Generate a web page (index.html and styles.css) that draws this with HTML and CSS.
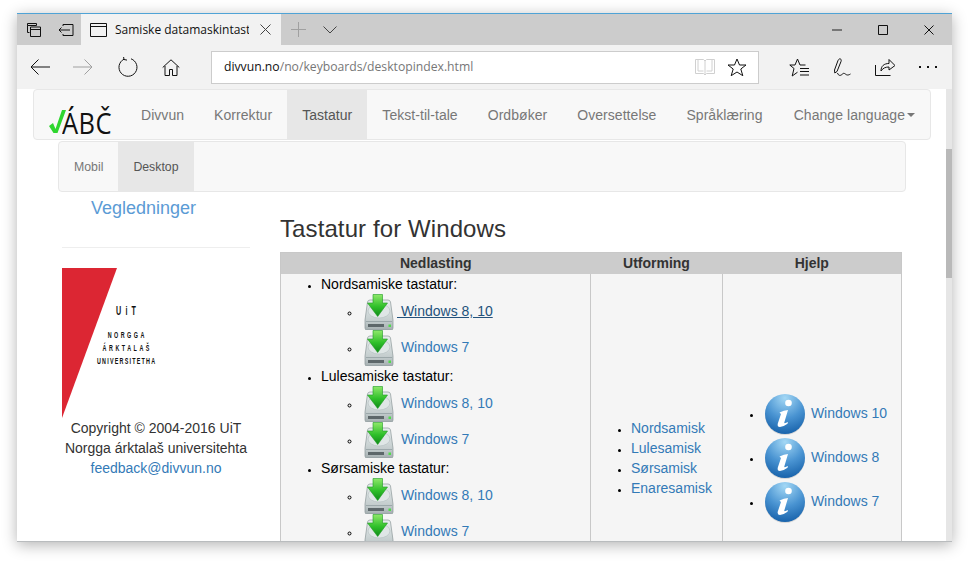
FILE: index.html
```html
<!DOCTYPE html>
<html lang="no">
<head>
  <meta charset="UTF-8" />
  <title>Samiske datamaskintastatur</title>
  <link rel="stylesheet" href="styles.css">
</head>
<body>
  <svg class="defs" width="0" height="0">
    <defs>
      <linearGradient id="gArrow" x1="0" y1="0" x2="0" y2="1">
        <stop offset="0" stop-color="#8fe86a"/>
        <stop offset="0.55" stop-color="#2fc02a"/>
        <stop offset="1" stop-color="#0f8a18"/>
      </linearGradient>
      <linearGradient id="gDisk" x1="0" y1="0" x2="0" y2="1">
        <stop offset="0" stop-color="#e8eeee"/>
        <stop offset="0.7" stop-color="#c3cccd"/>
        <stop offset="1" stop-color="#a4aeb0"/>
      </linearGradient>
      <radialGradient id="gInfo" cx="0.5" cy="0.1" r="1">
        <stop offset="0" stop-color="#a4d8f5"/>
        <stop offset="0.5" stop-color="#4a94d2"/>
        <stop offset="1" stop-color="#0c57a2"/>
      </radialGradient>
      <symbol id="disk" viewBox="0 0 36 36">
        <path d="M9 6h18q2 0 2.500 2L32 26v8a2 2 0 0 1-2 2H6a2 2 0 0 1-2-2v-8L6.500 8Q7 6 9 6z" fill="url(#gDisk)" stroke="#8b9698" stroke-width=".7"/>
        <ellipse cx="18" cy="17" rx="11" ry="7" fill="#dfe6e6" stroke="#b4bdbf" stroke-width=".6"/>
        <path d="M5 27.500h26" stroke="#8d999c" stroke-width=".7"/>
        <rect x="7" y="30" width="16" height="3" fill="#5d676a"/>
        <rect x="27.500" y="30.500" width="2.500" height="2.500" fill="#4fdc4a"/>
        <path d="M12 .5h9.500V9h5L16.700 22.500 6.500 9H12z" fill="url(#gArrow)" stroke="#1c9a22" stroke-width=".6"/>
      </symbol>
      <symbol id="info" viewBox="0 0 44 44">
        <ellipse cx="22" cy="23" rx="20" ry="20" fill="#000" opacity=".12"/>
        <circle cx="22" cy="22" r="20" fill="url(#gInfo)"/>
        <circle cx="25.500" cy="11" r="3.300" fill="#fff"/>
        <path d="M16.500 20.500q4.500-2.500 8.500-2.500L21.300 30.500q-.3 1.500 3.700-.5l-.5 1.700q-4 3-7.500 3.300-3 0-2.200-3.500L18 22z" fill="#fff"/>
      </symbol>
    </defs>
  </svg>

  <div class="window">
    <div class="titlebar">
      <svg class="ic ic-tabs" width="16" height="16" viewBox="0 0 16 16"><path d="M1.500 1.500h9v2h-9zM1.500 3.500v7h2M4.500 5h10v9.500h-10zM4.500 7.500h10" /></svg>
      <svg class="ic ic-aside" width="16" height="16" viewBox="0 0 16 16"><path d="M5 4V2.500h10v11H5V12M1 8h8M3.500 5.500L1 8l2.500 2.500M9 8h3" /></svg>
      <div class="tab">
        <svg class="ic" width="17" height="14" viewBox="0 0 17 14"><path d="M.5 .5h16v13H.5zM.5 3.500h16" /></svg>
        <span class="tab-title">Samiske datamaskintastatur</span>
        <svg class="ic ic-gray" width="11" height="11" viewBox="0 0 11 11"><path d="M.5 .5l10 10M10.500 .5l-10 10" /></svg>
      </div>
      <svg class="ic ic-light ic-plus" width="15" height="15" viewBox="0 0 15 15"><path d="M7.500 0v15M0 7.500h15" /></svg>
      <svg class="ic ic-gray ic-chev" width="14" height="8" viewBox="0 0 14 8"><path d="M.5 .5L7 7l6.500-6.500" /></svg>
      <div class="win-btns">
        <span class="win-min"></span>
        <svg class="ic" width="10" height="10" viewBox="0 0 10 10"><path d="M.5 .5h9v9h-9z" /></svg>
        <svg class="ic" width="10" height="10" viewBox="0 0 10 10"><path d="M.5 .5l9 9M9.500 .5l-9 9" /></svg>
      </div>
    </div>

    <div class="toolbar">
      <svg class="ic" width="20" height="16" viewBox="0 0 20 16"><path d="M20 8H1M8.500 .5L1 8l7.500 7.500" /></svg>
      <svg class="ic ic-light ic-fwd" width="20" height="16" viewBox="0 0 20 16"><path d="M0 8h19M11.500 .5L19 8l-7.500 7.500" /></svg>
      <svg class="ic" width="20" height="20" viewBox="0 0 20 20"><path d="M6 2.200A9 9 0 1 0 13 1.800M5.500 -.5L6 2.500l3 .6" /></svg>
      <svg class="ic ic-home" width="18" height="17" viewBox="0 0 18 17"><path d="M.7 8.500L9 .8l8.300 7.700M3 7v9.500h4.500v-6h3v6H15V7" /></svg>
      <div class="addr">
        <span class="url"><span class="host">divvun.no</span>/no/keyboards/desktopindex.html</span>
        <svg class="ic ic-pale" width="20" height="18" viewBox="0 0 20 18"><path d="M.5 1.500h8L10 3l1.500-1.500h8v14h-8L10 17l-1.500-1.500h-8zM10 3v14M3 1.500v11.500h5.500M17 1.500v11.500h-5.500" /></svg>
        <svg class="ic" width="20" height="19" viewBox="0 0 20 19"><path d="M10 1l2.500 6h6.500l-5.200 4 2 6.700L10 14l-5.800 3.700 2-6.700L1 7h6.500z" /></svg>
      </div>
      <div class="tools">
        <svg class="ic" width="20" height="19" viewBox="0 0 20 19"><path d="M16.500 7H11L8.500 1 6 7H.8L5 10.500 3.200 18l5.300-3.800M11 10.500h9M11 13.500h9M11 17h9" /></svg>
        <svg class="ic" width="18" height="19" viewBox="0 0 18 19"><path d="M5 2.500C6.500 -.5 9 1 8 3.500L4 13.500 1.800 15 1.500 12zM4.500 15c1 3 3 3 5 1s3 1 5 1 2.500-1 3-1" /></svg>
        <svg class="ic" width="20" height="18" viewBox="0 0 20 18"><path d="M.5 7v10.500h15M6 13c0-5 3-7.500 8-7.500V1.500l6 6-6 4.500V9c-3.500 0-6 1-8 4z" /></svg>
        <div class="dots"><i></i><i></i><i></i></div>
      </div>
    </div>

    <div class="viewport">
      <div class="page">
        <nav class="navbar">
          <a class="brand">
            <svg class="check" width="19" height="30" viewBox="0 0 19 30"><path d="M2 21l4-3 2.500 6L15 5h4l-8.500 23h-4z" /></svg>
            <span class="abc">ÁBČ</span>
          </a>
          <a class="nav-item">Divvun</a>
          <a class="nav-item">Korrektur</a>
          <a class="nav-item active">Tastatur</a>
          <a class="nav-item">Tekst-til-tale</a>
          <a class="nav-item">Ordbøker</a>
          <a class="nav-item">Oversettelse</a>
          <a class="nav-item">Språklæring</a>
          <a class="nav-item lang">Change language<b class="caret"></b></a>
        </nav>
        <nav class="subnav">
          <a class="nav-item">Mobil</a>
          <a class="nav-item active">Desktop</a>
        </nav>

        <div class="columns">
          <aside class="sidebar">
            <a class="side-link">Vegledninger</a>
            <hr>
            <svg class="uit" width="188" height="150" viewBox="0 0 188 150">
              <path d="M0 0h55L0 150z" fill="#dc2633"/>
              <text class="uit-big" transform="translate(64 47) scale(.6 1)" textLength="33">UiT</text>
              <text class="uit-small" transform="translate(64 70) scale(.6 1)" textLength="61">NORGGA</text>
              <text class="uit-small" transform="translate(64 83) scale(.6 1)" textLength="78">ÁRKTALAŠ</text>
              <text class="uit-small" transform="translate(64 96) scale(.6 1)" textLength="97">UNIVERSITETHA</text>
            </svg>
            <p class="copy">Copyright © 2004-2016 UiT<br>Norgga árktalaš universitehta<br><a>feedback@divvun.no</a></p>
          </aside>

          <main class="content">
            <h1>Tastatur for Windows</h1>
            <table>
              <colgroup><col class="col-a"><col class="col-b"><col class="col-c"></colgroup>
              <thead>
                <tr><th>Nedlasting</th><th>Utforming</th><th>Hjelp</th></tr>
              </thead>
              <tbody>
                <tr>
                  <td>
                    <ul class="downloads">
                      <li>Nordsamiske tastatur:
                        <ul>
                          <li><a class="hover"><svg class="dl"><use href="#disk"/></svg> Windows 8, 10</a></li>
                          <li><a><svg class="dl"><use href="#disk"/></svg> Windows 7</a></li>
                        </ul>
                      </li>
                      <li>Lulesamiske tastatur:
                        <ul>
                          <li><a><svg class="dl"><use href="#disk"/></svg> Windows 8, 10</a></li>
                          <li><a><svg class="dl"><use href="#disk"/></svg> Windows 7</a></li>
                        </ul>
                      </li>
                      <li>Sørsamiske tastatur:
                        <ul>
                          <li><a><svg class="dl"><use href="#disk"/></svg> Windows 8, 10</a></li>
                          <li><a><svg class="dl"><use href="#disk"/></svg> Windows 7</a></li>
                        </ul>
                      </li>
                      <li>Enaresamiske tastatur:
                        <ul>
                          <li><a><svg class="dl"><use href="#disk"/></svg> Windows 8, 10</a></li>
                          <li><a><svg class="dl"><use href="#disk"/></svg> Windows 7</a></li>
                        </ul>
                      </li>
                    </ul>
                  </td>
                  <td>
                    <ul>
                      <li><a>Nordsamisk</a></li>
                      <li><a>Lulesamisk</a></li>
                      <li><a>Sørsamisk</a></li>
                      <li><a>Enaresamisk</a></li>
                    </ul>
                  </td>
                  <td>
                    <ul class="helps">
                      <li><a><svg class="inf"><use href="#info"/></svg> Windows 10</a></li>
                      <li><a><svg class="inf"><use href="#info"/></svg> Windows 8</a></li>
                      <li><a><svg class="inf"><use href="#info"/></svg> Windows 7</a></li>
                    </ul>
                  </td>
                </tr>
              </tbody>
            </table>
          </main>
        </div>
      </div>
      <div class="scrollbar"><div class="thumb"></div></div>
    </div>
  </div>
</body>
</html>
```

FILE: styles.css
```css
html, body { height: 100%; }
body {
  margin: 0;
  padding: 13px 17px 0;
  box-sizing: border-box;
  background: #fff;
  overflow: hidden;
  font-family: "Liberation Sans", Arial, sans-serif;
  font-size: 14px;
  line-height: 20px;
  color: #333;
}
.defs { position: absolute; }

/* browser window */
.window {
  width: 935px;
  height: 529px;
  box-sizing: border-box;
  border-top: 1px solid #4fa3d6;
  border-bottom: 1px solid #b9bcbe;
  box-shadow: 0 3px 14px rgba(0, 0, 0, .3);
  display: flex;
  flex-direction: column;
  overflow: hidden;
  background: #fff;
}
.ic { fill: none; stroke: #111; stroke-width: 1; flex: none; display: block; }
.ic-gray { stroke: #444; }
.ic-light { stroke: #a0a0a0; }
.ic-pale { stroke: #d0d0d0; }

.titlebar {
  height: 31px;
  flex: none;
  background: #ccc;
  display: flex;
  align-items: center;
  font-family: "Open Sans", sans-serif;
}
.ic-tabs { margin-left: 9px; }
.ic-aside { margin-left: 16px; }
.tab {
  margin-left: 7px;
  width: 200px;
  height: 100%;
  box-sizing: border-box;
  padding: 0 10px 0 9px;
  background: #f2f2f2;
  display: flex;
  align-items: center;
  color: #111;
  font-size: 12px;
}
.tab-title {
  width: 135px;
  margin: 0 11px 0 8px;
  overflow: hidden;
  white-space: nowrap;
}
.ic-plus { margin-left: 10px; }
.ic-chev { margin-left: 17px; }
.win-btns {
  margin-left: auto;
  width: 120px;
  display: flex;
  align-items: center;
  gap: 36px;
}
.win-min { width: 10px; height: 2px; background: #777; }

.toolbar {
  height: 44px;
  flex: none;
  background: #f2f2f2;
  display: flex;
  align-items: center;
  gap: 25px;
  padding-left: 13px;
}
.ic-fwd { margin-left: -2px; }
.ic-home { margin: 0 1px 0 -1px; }
.addr {
  margin-left: 5px;
  width: 548px;
  height: 33px;
  box-sizing: border-box;
  border: 1px solid #ccc;
  background: #fff;
  display: flex;
  align-items: center;
  gap: 12px;
  padding: 0 11px 0 12px;
  font-family: "Open Sans", sans-serif;
  font-size: 12.200px;
  color: #777;
}
.url { margin-right: auto; white-space: nowrap; }
.host { color: #111; }
.tools {
  display: flex;
  align-items: center;
  gap: 24px;
  margin-left: 5px;
}
.dots { display: flex; gap: 6px; }
.dots i { width: 2px; height: 2px; background: #111; }

/* page */
.viewport { flex: 1; min-height: 0; display: flex; }
.page { flex: 1; min-width: 0; }
.scrollbar { width: 6px; flex: none; background: #e6e6e6; }
.thumb { margin-top: 60px; height: 129px; background: #b9b9b9; }

.navbar, .subnav {
  display: flex;
  box-sizing: border-box;
  background: #f8f8f8;
  border: 1px solid #e7e7e7;
  border-radius: 4px;
  color: #777;
  height: 51px;
}
.navbar { margin-left: 16px; width: 898px; letter-spacing: .05px; }
.subnav { margin: 1px 0 0 41px; width: 848px; font-size: 12.300px; }
.nav-item {
  padding: 14px 15px;
  display: flex;
  align-items: center;
  white-space: nowrap;
}
.nav-item.active { background: #e7e7e7; color: #555; }
.lang { margin-left: auto; }
.brand {
  width: 92px;
  flex: none;
  box-sizing: border-box;
  padding: 13px 0 0 13px;
  display: flex;
  align-items: flex-start;
  font-family: "Open Sans", sans-serif;
  font-size: 29px;
  line-height: 40px;
  color: #111;
}
.check { fill: #2fd62f; stroke: none; margin-right: -4px; margin-top: 2px; }
.abc { display: inline-block; transform: scaleX(.88); transform-origin: left center; letter-spacing: .5px; }
.caret {
  margin-left: 2px;
  border-top: 4px solid #777;
  border-left: 4px solid transparent;
  border-right: 4px solid transparent;
}

.columns { display: flex; }
.sidebar { width: 188px; margin-left: 45px; flex: none; }
.side-link {
  display: block;
  padding: 6px 0 0 29px;
  font-size: 18px;
  color: #5b9bd5;
}
hr { margin: 29px 0 20px; border: 0; border-top: 1px solid #eee; }
.uit { display: block; }
.uit-big { font-size: 12px; font-weight: bold; fill: #111; text-anchor: middle; }
.uit-small { font-size: 9px; font-weight: bold; fill: #111; text-anchor: middle; }
.copy { margin: 0; text-align: center; }
.copy a, td a { color: #337ab7; }

.content { margin-left: 30px; padding-top: 24px; width: 621px; flex: none; }
h1 {
  margin: 0 0 10px;
  font-size: 24px;
  line-height: 26px;
  font-weight: normal;
  letter-spacing: .1px;
}
table {
  width: 621px;
  table-layout: fixed;
  border-collapse: collapse;
  background: #f5f5f5;
  border: 1px solid #c8c8c8;
}
.col-a { width: 310px; }
.col-b { width: 132px; }
.col-c { width: 179px; }
th { background: #ccc; padding: 0 0 1px; text-align: center; }
td { padding: 0; border-left: 1px solid #c8c8c8; vertical-align: middle; color: #000; }
ul { margin: 0; padding-left: 40px; }
li::marker { font-size: 11px; }
.downloads li li { height: 36px; white-space: nowrap; }
.dl { width: 36px; height: 36px; vertical-align: middle; }
.helps li { height: 44px; white-space: nowrap; }
.inf { width: 44px; height: 44px; vertical-align: middle; }
a.hover { color: #23527c; text-decoration: underline; }
```
